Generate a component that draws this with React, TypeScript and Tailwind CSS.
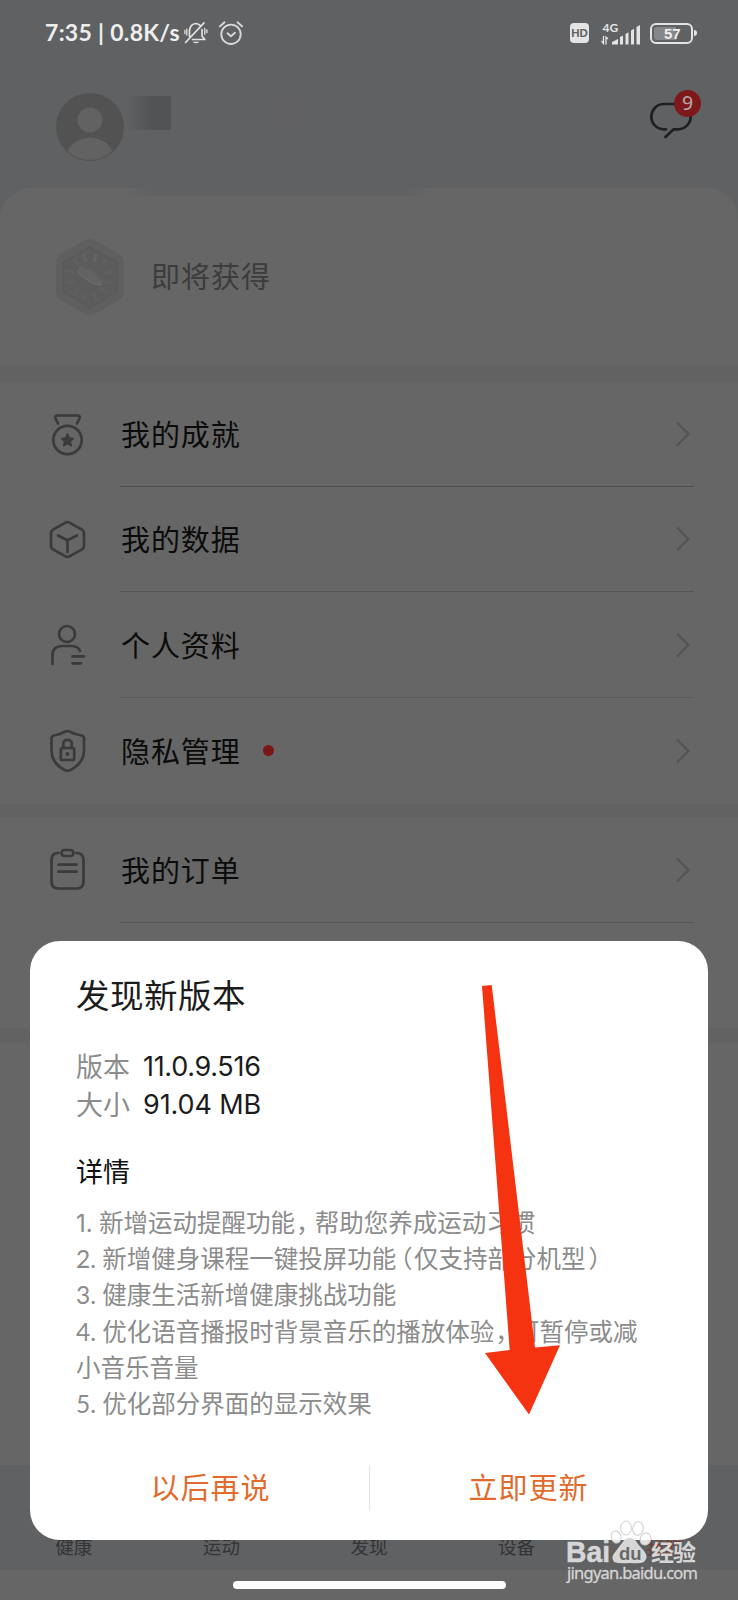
import type { ReactNode } from "react";

const achievement = (
  <>
    <path d="M14 11.500 11.500 6.500q-1-3 2-3h20q3 0 2 3l-2.500 5" />
    <circle cx="23.500" cy="28" r="14.200" />
    <path d="m23.500 21.500 2 4.300 4.500.6-3.300 3.200.8 4.600-4-2.200-4 2.200.8-4.600-3.300-3.200 4.500-.6Z" fill="#3a3a3a" strokeWidth="1" />
  </>
);
const cube = (
  <>
    <path d="M21.500 5.600q2-1.100 4 0l12.500 7q2 1.100 2 3.400v13q0 2.300-2 3.400l-12.500 7q-2 1.100-4 0l-12.500-7q-2-1.100-2-3.400V16q0-2.300 2-3.400Z" />
    <path d="m14 18.500 9.500 4.800 9.500-4.800M23.500 23.300V35" />
  </>
);
const profile = (
  <>
    <circle cx="23" cy="12" r="8" />
    <path d="M8.500 42v-8.500q0-9.500 10-9.500h8q8 0 9.500 5M28.500 34.300H40M28.500 41.300H37" />
  </>
);
const shield = (
  <>
    <path d="M21.500 3.500q2-1 4 0 5.500 3 12 4 2.500.5 2.500 3V22q0 13-13.500 20-3 1.300-6 0Q7.500 35 7.500 22V10.500q0-2.500 2.500-3 6-1 11.500-4Z" />
    <rect x="16.800" y="20" width="13.400" height="12" rx="1.500" />
    <path d="M19.300 20v-4q0-4.200 4.200-4.200t4.200 4.200v4" />
    <circle cx="23.500" cy="26" r="1.300" fill="#3a3a3a" strokeWidth="1.200" />
  </>
);
const order = (
  <>
    <path d="M14.500 6q-7 0-7 7v21.500q0 7 7 7h18q7 0 7-7V13q0-7-7-7" />
    <rect x="17.500" y="3" width="12" height="6" rx="3" />
    <path d="M14.500 17.700h18M14.500 24.700h18" />
  </>
);

function Row({ icon, label, dot, line = "border-transparent", height = "h-[105px]" }: { icon: ReactNode; label: string; dot?: boolean; line?: string; height?: string }) {
  return (
    <div className={`flex pl-11 ${height}`}>
      <div className="flex w-[76px] items-center pt-[1.500px]">
        <svg className="h-[47px] w-[47px]" viewBox="0 0 47 47" fill="none" stroke="#3a3a3a" strokeWidth="2.700" strokeLinecap="round" strokeLinejoin="round">
          {icon}
        </svg>
      </div>
      <div className={`mr-[44px] flex flex-1 items-center border-b ${line}`}>
        <span className="pt-[1px] pl-[1px] text-[29px] leading-none tracking-[0.900px] text-[#0b0b0b]">{label}</span>
        {dot && <span className="ml-[22.500px] h-[11px] w-[11px] rounded-full bg-[#7a1719]" />}
        <svg className="mr-1 ml-auto h-[26px] w-[14px]" viewBox="0 0 14 26" fill="none" stroke="#535353" strokeWidth="2.200">
          <path d="M1 1.500 12.500 13 1 24.500" />
        </svg>
      </div>
    </div>
  );
}

function StatusBar() {
  return (
    <div className="flex h-[66px] items-center pr-[41px] pl-[45px] text-[#eeeeee]">
      <span className="w-[139px] pb-[2px] text-[23px] leading-none font-bold tracking-[0.3px] whitespace-nowrap">7:35 | 0.8K/s</span>
      <svg className="h-6 w-6" viewBox="0 0 24 24" fill="none" stroke="#e2e2e2" strokeWidth="1.700" strokeLinecap="round" strokeLinejoin="round">
        <path d="M5.500 15.500V10Q6 3 12 2.500q2.500.2 4 1.800M18 8.500V15l2.800 3.500H8.500M1.500 21.500 20 1.800" />
        <path d="M2.800 8v6M.9 9.500v3M20.800 7.500V13M22.900 9v2.500" strokeWidth="1.300" />
        <path d="M8.500 20.700q3.500 3 7 0Z" fill="#ddd" stroke="none" />
      </svg>
      <svg className="ml-[11px] h-6 w-6" viewBox="0 0 24 24" fill="none" stroke="#d8d8d8" strokeWidth="1.900" strokeLinecap="round">
        <circle cx="12" cy="13.300" r="9.700" />
        <path d="m8.500 12.300 3.500 3 4-3.500M1 5.300l4.500-4M23 5.300l-4.500-4" />
      </svg>
      <div className="ml-auto flex items-center">
        <span className="flex h-5 w-[19px] items-center justify-center rounded-[4px] bg-[#e4e4e4] pt-[1px] font-['Liberation_Sans'] text-[11.500px] leading-none font-bold text-[#5f6163]">HD</span>
        <svg className="ml-[11px] h-[27px] w-10" viewBox="0 -4 40 27" fill="#e4e4e4">
          <text x="2.500" y="7.500" fontSize="12" fontWeight="700" fontFamily="Lato">4G</text>
          <path d="M12 20.500v-2.500l6-3v5.500ZM20 20.500v-7.500l3-1.500v9ZM25.500 20.500V10l3-1.700v12.200ZM31 20.500V6.500l3-1.700v15.700ZM36.500 20.500V3l3.500-2v19.500Z" />
          <path d="M3.500 12v7.500L1.500 17M6 20.500V13l2 2" fill="none" stroke="#e4e4e4" strokeWidth="1.300" />
        </svg>
        <div className="ml-[10px] flex h-[21px] w-[43px] items-center rounded-[6px] border-2 border-[#e4e4e4] p-[2px]">
          <div className="flex h-full w-[22px] items-center rounded-l-[3px] bg-[#86878a] pl-[10px] font-['Liberation_Sans'] text-[15px] leading-none font-bold text-[#eeeeee]">57</div>
        </div>
        <div className="ml-[1px] h-[6px] w-[3px] rounded-r bg-[#e4e4e4]" />
      </div>
    </div>
  );
}

function Profile() {
  return (
    <div className="flex h-[122px] items-start pr-[36px] pl-[56px]">
      <svg className="mt-[26px] h-[70px] w-[70px]" viewBox="0 0 70 70">
        <defs>
          <clipPath id="face">
            <circle cx="34" cy="35" r="33" />
          </clipPath>
        </defs>
        <circle cx="34" cy="35" r="34" fill="#525252" />
        <circle cx="34" cy="28" r="12.500" fill="#626262" />
        <ellipse cx="34" cy="67" rx="24" ry="21.500" fill="#626262" clipPath="url(#face)" />
      </svg>
      <div className="mt-[30px] h-[34px] w-[45px] bg-linear-to-r from-[#5f6163] to-[#525355] to-60%" />
      <div className="mt-[31px] ml-[103px] h-[33px] w-[32px] bg-[#616062]" />
      <div className="relative mt-[22px] ml-auto h-[54px] w-[52px]">
        <svg className="h-full w-full" viewBox="0 0 52 54" fill="none" stroke="#1d1f20" strokeWidth="2.700" strokeLinecap="round">
          <path d="M16 41.300H14A12.600 12.600 0 0 1 14 16H28A12.600 12.600 0 0 1 28 41.300H23.500L15.500 49" />
        </svg>
        <span className="absolute top-[1.500px] right-[1px] flex h-[27px] w-[27px] items-center justify-center rounded-full bg-[#7f181a] font-['Noto_Sans'] text-[19.500px] leading-none text-[#b5aaaa]">9</span>
      </div>
    </div>
  );
}

function Badge() {
  const rays = [0, 30, 60, 90, 120, 150, 180, 210, 240, 270, 300, 330];
  return (
    <svg className="h-[78px] w-[70px]" viewBox="0 0 70 78">
      <path d="M30 2q5-2.500 10 0l24 14q5 3 5 8v30q0 5-5 8L40 76q-5 2.500-10 0L6 62q-5-3-5-8V24q0-5 5-8Z" fill="#5f5f5f" />
      <path d="m35 9 27 15v30L35 70 8 54V24Z" fill="#5c5c5c" stroke="#585858" strokeWidth="1" />
      {rays.map((a) => (
        <path key={a} d="M35 16v6" stroke={a === 0 || a === 330 ? "#656565" : "#606060"} strokeWidth="2.500" strokeLinecap="round" transform={`rotate(${a + 15} 35 39)`} />
      ))}
      <path d="M22 32q2 1 2.500-4l6 3.500q3 0 5-1l11 12q3 5-2 5-11-1-22.500-15.500Z" fill="#636363" />
      <path d="M22 33q12 14 25 14" fill="none" stroke="#707070" strokeWidth=".8" />
    </svg>
  );
}

function Comma() {
  return <span className="inline-block pr-[6.500px] pl-[1px] [font-feature-settings:'halt']">，</span>;
}

function Dialog() {
  return (
    <div className="absolute top-[941px] left-[30px] flex h-[599px] w-[678px] flex-col rounded-[30px] bg-white pl-[46px] text-[#1c1c1c]">
      <h2 className="mt-[37px] text-[33.500px] leading-[34px] tracking-[0.5px]">发现新版本</h2>
      <dl className="mt-[36px] grid grid-cols-[67px_1fr] text-[27px] leading-[37.500px]">
        <dt className="text-[#8c8c8c]">版本</dt>
        <dd className="font-[Inter] text-[27px] tracking-[-0.300px]">11.0.9.516</dd>
        <dt className="text-[#8c8c8c]">大小</dt>
        <dd className="font-[Inter] text-[27px] tracking-[-0.100px]">91.04 MB</dd>
      </dl>
      <h3 className="mt-[34px] text-[27px] leading-[30px] text-[#111]">详情</h3>
      <div className="mt-[18px] text-[24.500px] leading-[36.200px] whitespace-nowrap text-[#8c8c8c]">
        <p><span className="inline-block w-[23px] font-[Inter] text-[24px] leading-none">1.</span>新增运动提醒功能<Comma />帮助您养成运动习惯</p>
        <p>2. 新增健身课程一键投屏功能<span className="inline-block pr-[1.500px] pl-[4px] [font-feature-settings:'halt']">（</span>仅支持部分机型<span className="pl-[3px] [font-feature-settings:'halt']">）</span></p>
        <p>3. 健康生活新增健康挑战功能</p>
        <p>4. 优化语音播报时背景音乐的播放体验<Comma /><span className="ml-[1px]">可暂停或减</span></p>
        <p>小音乐音量</p>
        <p>5. 优化部分界面的显示效果</p>
      </div>
      <div className="mt-[43px] -ml-[46px] flex h-[46px] text-[29px] leading-[45px] tracking-[1px] text-[#e16b2d]">
        <button className="flex-1 border-r border-[#e6e6e6] pb-[1px] pl-[22px]">以后再说</button>
        <button className="flex-1 pr-[21px] pb-[1px]">立即更新</button>
      </div>
    </div>
  );
}

function Watermark() {
  return (
    <svg className="absolute top-[1510px] left-[560px] h-[80px] w-[150px]" viewBox="0 0 150 80">
      <g fill="#fff" fillOpacity=".82" stroke="#cfcfcf" strokeWidth="1">
        <ellipse cx="66" cy="18" rx="5.300" ry="7" />
        <ellipse cx="78" cy="18.500" rx="5.200" ry="6.800" transform="rotate(10 78 18.500)" />
        <ellipse cx="56" cy="27" rx="4.800" ry="6.200" transform="rotate(-18 56 27)" />
        <ellipse cx="85.500" cy="29" rx="5.200" ry="6.200" transform="rotate(25 85.500 29)" />
      </g>
      <path d="M70 28q5 0 8 6l6 7q5 6 0 11-4 2-14 1-11 1-16-1-4-5 2-11l6-8q3-5 8-5Z" fill="#d6d6d6" />
      <g fill="#d6d6d6" fontWeight="700">
        <text x="6" y="51.500" fontSize="29" fontFamily="Liberation Sans" stroke="#d6d6d6" strokeWidth=".5" textLength="44" lengthAdjust="spacingAndGlyphs">Bai</text>
        <text x="91" y="51" fontSize="23" fontFamily="Noto Sans CJK SC" textLength="45">经验</text>
        <text x="7" y="69" fontSize="16.500" fontWeight="400" fontFamily="Noto Sans" stroke="#d2d2d2" strokeWidth=".3" textLength="131">jingyan.baidu.com</text>
      </g>
      <text x="59" y="50" fontSize="18.500" fontWeight="700" fontFamily="Liberation Sans" fill="#66686a">du</text>
    </svg>
  );
}

export default function App() {
  return (
    <div className="relative flex h-[1600px] w-[738px] flex-col overflow-hidden bg-[#5f6163] font-[Lato,'Noto_Sans_CJK_SC',sans-serif]">
      <StatusBar />
      <Profile />
      <div className="relative flex h-[178px] items-center rounded-t-[32px] bg-[#666666] pl-[55px]">
        <div className="absolute top-0 left-[125px] h-[8px] w-[305px] bg-[linear-gradient(to_right,transparent,#5f6163_25px,#5f6163_280px,transparent)]" />
        <Badge />
        <span className="ml-[26px] pb-[1px] text-[29px] leading-none tracking-[1px] text-[#3c3c3c]">即将获得</span>
      </div>
      <div className="h-4 bg-[#626262]" />
      <div className="bg-[#666666]">
        <Row icon={achievement} label="我的成就" line="border-[#4c4c4c]" />
        <Row icon={cube} label="我的数据" line="border-[#565656]" />
        <Row icon={profile} label="个人资料" line="border-[#5b5b5b]" height="h-[106px]" />
        <Row icon={shield} label="隐私管理" dot height="h-[106px]" />
      </div>
      <div className="h-[13px] bg-[#626262]" />
      <div className="bg-[#666666]">
        <Row icon={order} label="我的订单" line="border-[#555555]" height="h-[106px]" />
        <div className="h-[105px]" />
      </div>
      <div className="h-[15px] bg-[#626262]" />
      <div className="flex-1 bg-[#666666]" />
      <div className="grid h-[105px] grid-cols-5 items-end bg-[#5f6163] pb-[13px] text-center text-[18.500px] leading-[20px] text-[#333435]">
        <span>健康</span>
        <span>运动</span>
        <span>发现</span>
        <span>设备</span>
        <span className="text-[#7a3d2c]">我的</span>
      </div>
      <div className="flex h-[30px] justify-center bg-[#666666] pt-[11px]">
        <div className="h-2 w-[273px] rounded-full bg-white" />
      </div>
      <Dialog />
      <svg className="absolute top-[980px] left-[480px] h-[440px] w-[84px]" viewBox="480 980 84 440">
        <path d="M482 986 491.700 985 535 1347.500 560 1345.300 529 1414.500 485 1353 509.700 1350Z" fill="#f53311" />
      </svg>
      <Watermark />
    </div>
  );
}
